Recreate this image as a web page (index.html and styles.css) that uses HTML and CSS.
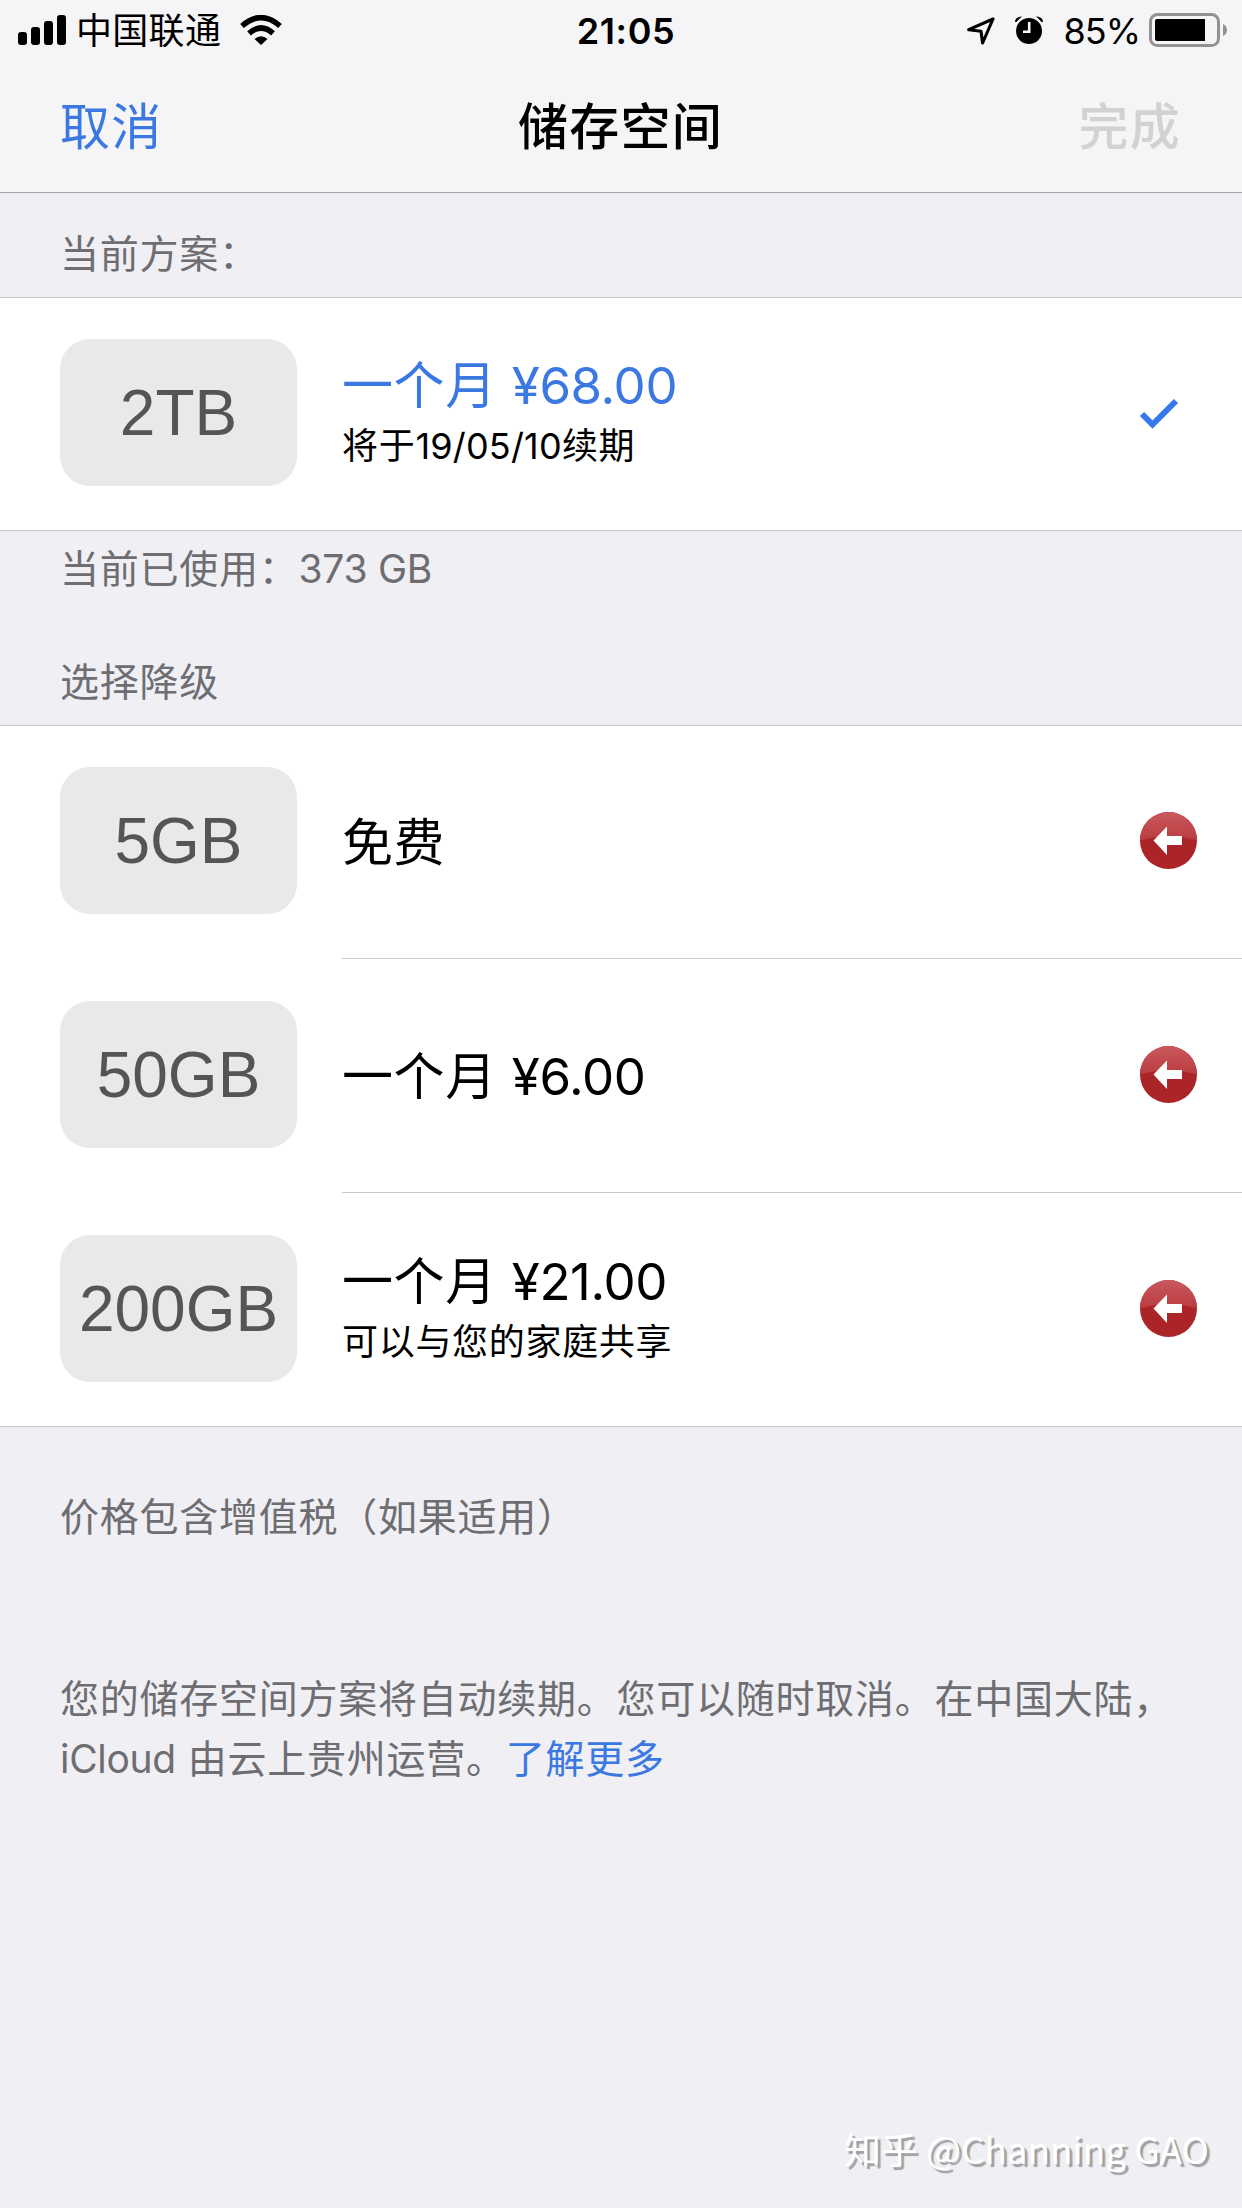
FILE: index.html
```html
<!DOCTYPE html>
<html lang="zh-CN">
<head>
<meta charset="utf-8">
<title>储存空间</title>
<link rel="stylesheet" href="styles.css">
</head>
<body>
<header class="top">
  <div class="status">
    <div class="status-left">
      <svg class="signal" width="48" height="30" viewBox="0 0 48 30"><rect x="0" y="17" width="9" height="13" rx="3"/><rect x="13" y="12" width="9" height="18" rx="3"/><rect x="26" y="6" width="9" height="24" rx="3"/><rect x="39" y="0" width="9" height="30" rx="3"/></svg>
      <span class="carrier">中国联通</span>
      <svg class="wifi" width="42" height="30" viewBox="0 0 42 30"><g fill="none" stroke="#000" stroke-width="5.6"><path d="M2 11Q21 -5.6 40 11"/><path d="M9 18.3Q21 7.7 33 18.3"/></g><path d="M14.5 24Q21 18.5 27.5 24L21 30Z"/></svg>
    </div>
    <div class="clock">21:05</div>
    <div class="status-right">
      <svg class="locate" width="28" height="28" viewBox="0 0 28 28"><path d="M26 2L1.7 12.7L14 14.2L15.6 26Z" fill="none" stroke="#000" stroke-width="3.1" stroke-linejoin="round"/></svg>
      <svg class="alarm" width="28" height="28" viewBox="0 0 28 28"><circle cx="14" cy="15" r="13"/><path d="M0 6Q0 1 7 .2L1.4 6ZM28 6Q28 1 21 .2L26.6 6Z"/><path d="M14.2 6V15.7H8" fill="none" stroke="#f5f5f7" stroke-width="2.6"/></svg>
      <span class="percent">85%</span>
      <svg class="battery" width="79" height="34" viewBox="0 0 79 34"><rect x="1.5" y="1.5" width="68" height="31" rx="7" fill="none" stroke="#929294" stroke-width="3"/><path d="M8 6H56V28H8Q6 28 6 26V8Q6 6 8 6Z"/><path d="M74 11Q78 13 78 17T74 23Z" fill="#929294"/></svg>
    </div>
  </div>
  <nav class="nav">
    <a class="cancel">取消</a>
    <h1 class="title">储存空间</h1>
    <span class="done">完成</span>
  </nav>
</header>

<main>
  <p class="label label-current">当前方案：</p>
  <ul class="list">
    <li class="row">
      <span class="pill">2TB</span>
      <div class="body">
        <div class="text">
          <span class="price blue">一个月 <span class="num">¥68.00</span></span>
          <span class="sub">将于<span class="date">19/05/10</span>续期</span>
        </div>
        <svg class="check" width="40" height="32" viewBox="0 0 40 32"><path d="M3 17L13.5 27.5L37 4" fill="none" stroke="#3478ec" stroke-width="6"/></svg>
      </div>
    </li>
  </ul>
  <p class="label label-used">当前已使用：<span class="used">373 GB</span></p>
  <p class="label label-choose">选择降级</p>
  <ul class="list">
    <li class="row">
      <span class="pill">5GB</span>
      <div class="body">
        <div class="text single"><span class="price">免费</span></div>
        <svg class="down" width="57" height="57" viewBox="0 0 57 57"><defs><linearGradient id="gloss" x1="0" y1="0" x2="0" y2="1"><stop offset="0" stop-color="#c95a5e"/><stop offset="1" stop-color="#ba3b3f"/></linearGradient></defs><circle cx="28.5" cy="28.5" r="28.5" fill="#ab2427"/><path d="M0 28.5A28.5 28.5 0 0 1 57 28.5Q28.5 20 0 28.5Z" fill="url(#gloss)"/><path d="M13.5 28.5L27 14.5V24H42V33H27V43Z" fill="#fff"/></svg>
      </div>
    </li>
    <li class="row">
      <span class="pill">50GB</span>
      <div class="body">
        <div class="text single"><span class="price">一个月 <span class="num">¥6.00</span></span></div>
        <svg class="down" width="57" height="57" viewBox="0 0 57 57"><circle cx="28.5" cy="28.5" r="28.5" fill="#ab2427"/><path d="M0 28.5A28.5 28.5 0 0 1 57 28.5Q28.5 20 0 28.5Z" fill="url(#gloss)"/><path d="M13.5 28.5L27 14.5V24H42V33H27V43Z" fill="#fff"/></svg>
      </div>
    </li>
    <li class="row">
      <span class="pill">200GB</span>
      <div class="body">
        <div class="text">
          <span class="price">一个月 <span class="num">¥21.00</span></span>
          <span class="sub">可以与您的家庭共享</span>
        </div>
        <svg class="down" width="57" height="57" viewBox="0 0 57 57"><circle cx="28.5" cy="28.5" r="28.5" fill="#ab2427"/><path d="M0 28.5A28.5 28.5 0 0 1 57 28.5Q28.5 20 0 28.5Z" fill="url(#gloss)"/><path d="M13.5 28.5L27 14.5V24H42V33H27V43Z" fill="#fff"/></svg>
      </div>
    </li>
  </ul>
  <p class="label label-tax">价格包含增值税（如果适用）</p>
  <p class="label label-terms">您的储存空间方案将自动续期。您可以随时取消。在中国大陆，<br><span class="brand">iCloud</span> 由云上贵州运营。<a class="blue">了解更多</a></p>
</main>
<footer class="mark">知乎 @Channing GAO</footer>
</body>
</html>
```
FILE: styles.css
```css
* { box-sizing: border-box; }
body {
  margin: 0;
  width: 1242px;
  height: 2208px;
  overflow: hidden;
  display: flex;
  flex-direction: column;
  background: #efeff4;
  color: #000;
  font-family: Inter, "Noto Sans CJK SC", sans-serif;
}
main { flex: 1; }
svg { display: block; flex: none; }
.top {
  background: #f5f5f7;
  height: 193px;
  border-bottom: 1px solid #a4a4a9;
}
.status {
  height: 62px;
  line-height: 62px;
  font-size: 36px;
  display: grid;
  grid-template-columns: 1fr auto 1fr;
  padding: 0 14px 0 18px;
}
.status-left, .status-right { display: flex; align-items: flex-start; }
.status-right { justify-content: flex-end; }
.signal { margin-top: 15px; }
.carrier { margin-left: 10px; letter-spacing: 0.3px; }
.wifi { margin: 15px 0 0 19px; }
.clock { font-weight: 600; letter-spacing: 0.6px; padding-left: 6px; }
.locate { margin: 17px 20px 0 0; }
.alarm { margin: 16px 20px 0 0; }
.percent { margin-right: 9px; letter-spacing: -1px; }
.battery { margin-top: 13px; }
.nav {
  height: 130px;
  line-height: 131px;
  font-size: 50px;
  letter-spacing: 1.2px;
  display: grid;
  grid-template-columns: 1fr auto 1fr;
  padding: 0 61px 0 60px;
}
.title { margin: 0; font-size: inherit; font-weight: 500; }
.cancel, .blue { color: #3b78e2; }
.done { text-align: right; color: #d2d2d4; font-weight: 500; }
.label {
  margin: 0;
  padding: 0 60px;
  font-size: 39px;
  line-height: 60px;
  letter-spacing: 0.75px;
  color: #6d6d72;
  white-space: nowrap;
}
.used, .brand { letter-spacing: -0.3px; }
.label-current { padding-top: 31px; height: 104px; }
.label-used { padding-top: 8px; height: 121px; }
.label-choose { height: 73px; }
.label-tax { padding-top: 60px; height: 242px; }
.list {
  margin: 0;
  padding: 0;
  list-style: none;
  background: #fff;
  border-top: 1px solid #c8c7cc;
  border-bottom: 1px solid #c8c7cc;
}
.row { height: 232px; display: flex; padding-left: 60px; }
.row + .row { height: 234px; }
.pill {
  width: 237px;
  height: 147px;
  margin: 41px 45px 0 0;
  border-radius: 30px;
  background: #e9e9e9;
  color: #555;
  font: 64px/149px "Liberation Sans", sans-serif;
  text-align: center;
  flex: none;
}
.row + .row .pill { margin-top: 43px; }
.body {
  flex: 1;
  display: flex;
  align-items: center;
  justify-content: space-between;
  padding: 0 45px 3px 0;
}
.row + .row .body { border-top: 1px solid #c8c7cc; }
.text { display: flex; flex-direction: column; padding-top: 2px; }
.single { padding-top: 5px; }
.price { font-size: 51px; line-height: 66px; letter-spacing: 0.6px; }
.num { letter-spacing: -0.4px; }
.sub { font-size: 36px; line-height: 55px; letter-spacing: 0.7px; }
.date { letter-spacing: 0.2px; }
.check { margin-right: 18px; }
.mark {
  padding-right: 33px;
  height: 87px;
  font: 36.9px/54px "Noto Sans CJK SC", sans-serif;
  text-align: right;
  color: #fff;
  text-shadow: 3px 3px 1px #a0a0a3;
}
```
